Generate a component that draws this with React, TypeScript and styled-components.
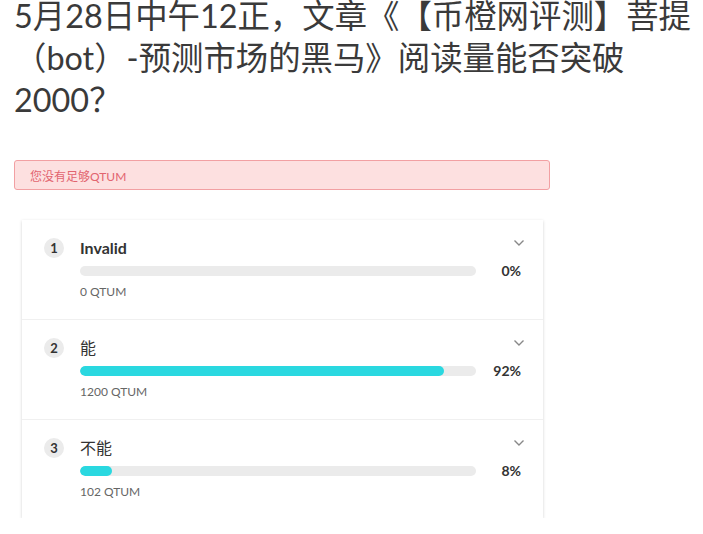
import React from 'react'
import styled, { createGlobalStyle } from 'styled-components'

const GlobalStyle = createGlobalStyle`
  body {
    margin: 0;
    background: #fff;
    font-family: Lato, "Noto Sans CJK SC", sans-serif;
    color: #333;
  }
`

const PageStyled = styled.div`
  padding: 0 8px 0 14px;
`

const TitleStyled = styled.h1`
  margin: -5px 0 0 0;
  font-size: 32.4px;
  font-weight: 400;
  line-height: 42px;
  color: #3a3a3a;
  text-spacing-trim: space-all;
`

const AlertStyled = styled.div`
  margin-top: 39px;
  width: 536px;
  box-sizing: border-box;
  height: 30px;
  display: flex;
  align-items: center;
  padding: 0 15px;
  border: 1px solid #f2a0a3;
  border-radius: 3px;
  background: #fde0e0;
  color: #e2646f;
  font-size: 12px;
`

const CardStyled = styled.div`
  margin: 30px 0 0 8px;
  width: 521px;
  background: #fff;
  box-shadow: 0 1px 3px rgba(0, 0, 0, 0.18);
`

const ItemStyled = styled.div`
  display: flex;
  box-sizing: border-box;
  height: 100px;
  padding: 18px 18px 0 22px;
  border-bottom: 1px solid #f0f0f0;

  &:last-child {
    border-bottom: none;
    height: 98px;
  }
`

const BadgeStyled = styled.div`
  flex: none;
  width: 20px;
  height: 20px;
  border-radius: 50%;
  background: #ebebeb;
  display: flex;
  align-items: center;
  justify-content: center;
  font-size: 13px;
  font-weight: 700;
  color: #333;
`

const BodyStyled = styled.div`
  flex: 1;
  margin-left: 16px;
`

const HeaderStyled = styled.div`
  display: flex;
  justify-content: space-between;
  align-items: flex-start;
  height: 20px;
`

const NameStyled = styled.div<{ $bold: boolean }>`
  font-size: 16px;
  line-height: 20px;
  font-weight: ${props => (props.$bold ? 700 : 400)};
  color: #333;
`

const ChevronStyled = styled.svg`
  margin-top: 1px;
  color: #888;
`

const BarRowStyled = styled.div`
  display: flex;
  align-items: center;
  margin-top: 8px;
  padding-right: 4px;
`

const TrackStyled = styled.div`
  flex: 1;
  height: 10px;
  border-radius: 5px;
  background: #ebebeb;
  overflow: hidden;
`

const FillStyled = styled.div`
  height: 100%;
  border-radius: 5px;
  background: #2ad8e0;
`

const PercentStyled = styled.div`
  width: 45px;
  text-align: right;
  font-size: 14px;
  font-weight: 700;
  line-height: 10px;
  color: #333;
`

const AmountStyled = styled.div`
  margin-top: 8px;
  font-size: 12px;
  line-height: 16px;
  color: #666;
`

const options = [
  { name: 'Invalid', percent: 0, amount: 0, bold: true },
  { name: '能', percent: 92, amount: 1200, bold: false },
  { name: '不能', percent: 8, amount: 102, bold: false },
]

function App() {
  return (
    <PageStyled>
      <GlobalStyle />
      <TitleStyled>5月28日中午12正，文章《【币橙网评测】菩提（bot）-预测市场的黑马》阅读量能否突破2000？</TitleStyled>
      <AlertStyled>您没有足够QTUM</AlertStyled>
      <CardStyled>
        {options.map((option, i) => (
          <ItemStyled key={option.name}>
            <BadgeStyled>{i + 1}</BadgeStyled>
            <BodyStyled>
              <HeaderStyled>
                <NameStyled $bold={option.bold}>{option.name}</NameStyled>
                <ChevronStyled width="12" height="8" viewBox="0 0 12 8">
                  <polyline points="1.5,1.5 6,6 10.5,1.5" fill="none" stroke="currentColor" strokeWidth="1.4" />
                </ChevronStyled>
              </HeaderStyled>
              <BarRowStyled>
                <TrackStyled>
                  <FillStyled style={{ width: `${option.percent}%` }} />
                </TrackStyled>
                <PercentStyled>{option.percent}%</PercentStyled>
              </BarRowStyled>
              <AmountStyled>{option.amount} QTUM</AmountStyled>
            </BodyStyled>
          </ItemStyled>
        ))}
      </CardStyled>
    </PageStyled>
  )
}

export default App
